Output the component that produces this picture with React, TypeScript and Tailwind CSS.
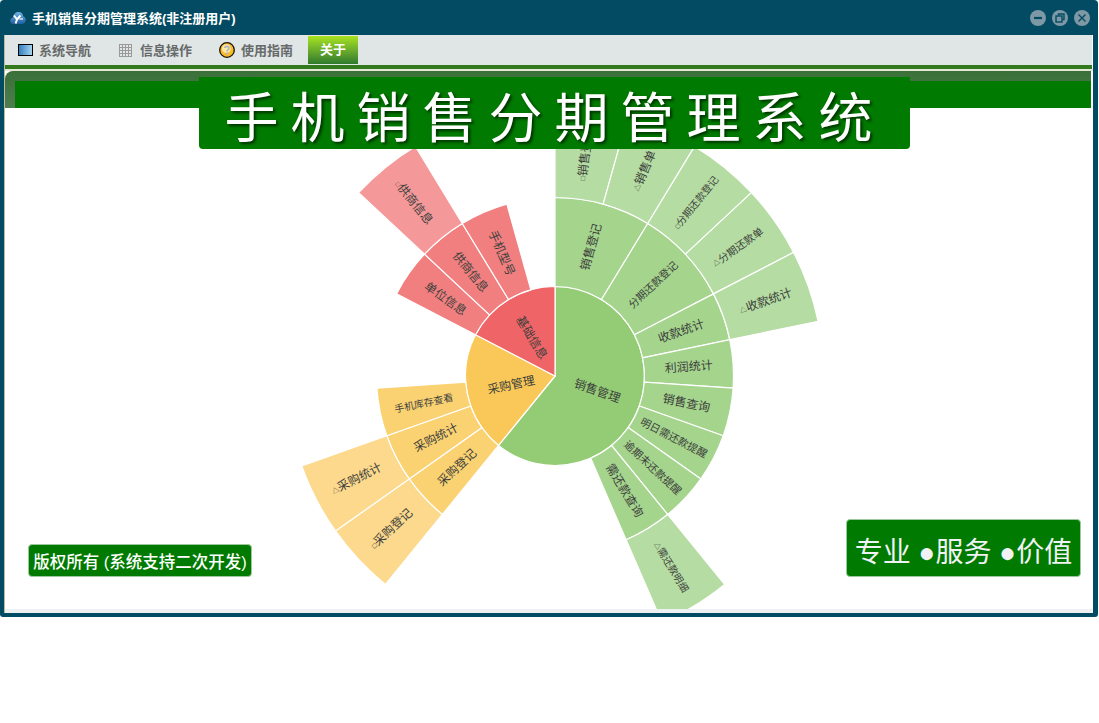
const CX = 550;
const CY = 305;
const UNIT = 360 / 23;

const FILL = {
  green: ["#94cc76", "#a5d48d", "#b5dca2"],
  orange: ["#fac858", "#fbd272", "#fcd98c"],
  red: ["#ef6567", "#f17f80", "#f59899"],
};

type Node = {
  label: string;
  mark?: string;
  from: number;
  to: number;
  ring: number;
  color: keyof typeof FILL;
  size: number;
};

const nodes: Node[] = [
  { label: "销售管理", from: 0, to: 14, ring: 0, color: "green", size: 12 },
  { label: "采购管理", from: 14, to: 19, ring: 0, color: "orange", size: 12 },
  { label: "基础信息", from: 19, to: 23, ring: 0, color: "red", size: 12 },

  { label: "销售登记", from: 0, to: 2, ring: 1, color: "green", size: 12 },
  { label: "分期还款登记", from: 2, to: 4, ring: 1, color: "green", size: 10.5 },
  { label: "收款统计", from: 4, to: 5, ring: 1, color: "green", size: 12 },
  { label: "利润统计", from: 5, to: 6, ring: 1, color: "green", size: 12 },
  { label: "销售查询", from: 6, to: 7, ring: 1, color: "green", size: 12 },
  { label: "明日需还款提醒", from: 7, to: 8, ring: 1, color: "green", size: 10.5 },
  { label: "逾期未还款提醒", from: 8, to: 9, ring: 1, color: "green", size: 10.5 },
  { label: "需还款查询", from: 9, to: 10, ring: 1, color: "green", size: 12 },
  { label: "采购登记", from: 14, to: 15, ring: 1, color: "orange", size: 12 },
  { label: "采购统计", from: 15, to: 16, ring: 1, color: "orange", size: 12 },
  { label: "手机库存查看", from: 16, to: 17, ring: 1, color: "orange", size: 10 },
  { label: "单位信息", from: 19, to: 20, ring: 1, color: "red", size: 12 },
  { label: "供商信息", from: 20, to: 21, ring: 1, color: "red", size: 12 },
  { label: "手机型号", from: 21, to: 22, ring: 1, color: "red", size: 12 },

  { label: "销售登记", mark: "□", from: 0, to: 1, ring: 2, color: "green", size: 12 },
  { label: "销售单", mark: "△", from: 1, to: 2, ring: 2, color: "green", size: 12 },
  { label: "分期还款登记", mark: "□", from: 2, to: 3, ring: 2, color: "green", size: 10 },
  { label: "分期还款单", mark: "△", from: 3, to: 4, ring: 2, color: "green", size: 10.5 },
  { label: "收款统计", mark: "△", from: 4, to: 5, ring: 2, color: "green", size: 12 },
  { label: "需还款明细", mark: "△", from: 9, to: 10, ring: 2, color: "green", size: 10 },
  { label: "采购登记", mark: "□", from: 14, to: 15, ring: 2, color: "orange", size: 12 },
  { label: "采购统计", mark: "△", from: 15, to: 16, ring: 2, color: "orange", size: 12 },
  { label: "供商信息", mark: "□", from: 20, to: 21, ring: 2, color: "red", size: 12 },
];

const RADII = [0, 89.5, 178.5, 268.7];

function point(r: number, deg: number) {
  const a = (deg * Math.PI) / 180;
  return [CX + r * Math.sin(a), CY - r * Math.cos(a)];
}

function slicePath(n: Node) {
  const r0 = RADII[n.ring];
  const r1 = RADII[n.ring + 1];
  const a0 = n.from * UNIT;
  const a1 = n.to * UNIT;
  const large = a1 - a0 > 180 ? 1 : 0;
  const [x0, y0] = point(r1, a0);
  const [x1, y1] = point(r1, a1);
  if (r0 === 0) return `M${CX},${CY} L${x0},${y0} A${r1},${r1} 0 ${large} 1 ${x1},${y1} Z`;
  const [x2, y2] = point(r0, a1);
  const [x3, y3] = point(r0, a0);
  return `M${x0},${y0} A${r1},${r1} 0 ${large} 1 ${x1},${y1} L${x2},${y2} A${r0},${r0} 0 ${large} 0 ${x3},${y3} Z`;
}

function Sunburst() {
  return (
    <svg className="absolute inset-0 w-full h-full" viewBox="0 0 1086 538">
      {nodes.map((n, i) => (
        <path key={i} d={slicePath(n)} fill={FILL[n.color][n.ring]} stroke="#ffffff" strokeWidth={1.2} />
      ))}
      {nodes.map((n, i) => {
        const mid = ((n.from + n.to) / 2) * UNIT;
        const [x, y] = point((RADII[n.ring] + RADII[n.ring + 1]) / 2, mid);
        const rot = mid > 180 ? mid - 270 : mid - 90;
        return (
          <text
            key={i}
            x={x}
            y={y}
            transform={`rotate(${rot} ${x} ${y})`}
            textAnchor="middle"
            dominantBaseline="central"
            fontSize={n.size}
            fill="#3c3f3c"
          >
            {n.mark && (
              <tspan fontSize={7} fill="#333333">
                {n.mark}
              </tspan>
            )}
            {n.label}
          </text>
        );
      })}
    </svg>
  );
}

function AppLogo() {
  return (
    <svg width="16" height="14" viewBox="0 0 16 14">
      <defs>
        <linearGradient id="cloud" x1="0" y1="0" x2="0" y2="1">
          <stop offset="0" stopColor="#6fb2e6" />
          <stop offset="1" stopColor="#1f5f9f" />
        </linearGradient>
      </defs>
      <path d="M3.5 13 C1 13 0 11 0.4 9 C0.7 7.5 1.8 6.6 3 6.5 C3.3 3 6 1 8.5 1 C11.5 1 13 3 13.3 5.5 C15 6 16 7.6 15.6 9.6 C15.2 11.8 13.6 13 12 13 Z" fill="url(#cloud)" />
      <path d="M4 4.5 L7 8.5 L5.6 12.5 M10.5 4.5 L7 8.5" stroke="#ffffff" strokeWidth="2" fill="none" />
      <path d="M9.5 8 H13" stroke="#ffffff" strokeWidth="1.2" fill="none" />
    </svg>
  );
}

function MonitorIcon() {
  return <div className="w-[15px] h-[12px] border border-black bg-gradient-to-r from-[#2f7fc0] to-[#a6d3ee]" />;
}

function GridIcon() {
  return (
    <svg className="mr-[2px]" width="13" height="13" viewBox="0 0 13 13" stroke="#9a9a9a" strokeWidth="1">
      {[0.5, 3.5, 6.5, 9.5, 12.5].map((p) => (
        <g key={p}>
          <path d={`M${p} 0 V13`} />
          <path d={`M0 ${p} H13`} />
        </g>
      ))}
    </svg>
  );
}

function HelpIcon() {
  return (
    <svg width="16" height="16" viewBox="0 0 16 16">
      <circle cx="8" cy="8" r="7.3" fill="#f8bb2c" stroke="#1a1208" strokeWidth="1.3" />
      <circle cx="7.4" cy="6.6" r="4.4" fill="#fdeaa0" />
      <path d="M5.8 6 C5.8 3.8 10 3.8 10 6 C10 7.6 8 7.6 8 9.4" stroke="#b4b4c4" strokeWidth="1.7" fill="none" />
      <circle cx="8" cy="11.6" r="1.1" fill="#b4b4c4" />
    </svg>
  );
}

function WinButton({ children }: { children: React.ReactNode }) {
  return (
    <div className="w-4 h-4 rounded-full bg-[#7e98a5] flex items-center justify-center">
      <svg width="12" height="12" viewBox="0 0 12 12" fill="none" stroke="#024b63" strokeWidth="1.4">
        {children}
      </svg>
    </div>
  );
}

function MenuItem({ icon, label, className }: { icon: React.ReactNode; label: string; className: string }) {
  return (
    <div className={`flex items-center gap-[6px] ${className}`}>
      {icon}
      <span className="mt-[2px] text-[13px] font-bold text-[#666a6a]">{label}</span>
    </div>
  );
}

export default function App() {
  return (
    <div className="w-[1098px] h-[617px] bg-[#024b63] rounded-t-[4px] rounded-b-[3px] flex flex-col font-['Liberation_Sans','Noto_Sans_CJK_SC',sans-serif]">
      {/* title bar */}
      <div className="h-[35px] flex items-center pl-[10px] pr-[8px]">
        <AppLogo />
        <span className="ml-[6px] mt-[2px] text-[13px] font-bold text-white">手机销售分期管理系统(非注册用户)</span>
        <div className="ml-auto flex gap-[6px]">
          <WinButton>
            <path d="M2 6 H10" strokeWidth="2.2" />
          </WinButton>
          <WinButton>
            <rect x="2" y="4" width="6" height="6" />
            <path d="M4.5 3.5 V2 H10 V7.5 H8.5" />
          </WinButton>
          <WinButton>
            <path d="M2.5 2.5 L9.5 9.5 M9.5 2.5 L2.5 9.5" />
          </WinButton>
        </div>
      </div>

      {/* body */}
      <div className="flex-1 ml-[4px] mr-[5px] mb-[4px] border-l border-[#b9bb9a] bg-white flex flex-col min-h-0">
        <div className="h-[30px] mr-[1px] bg-[#e0e5e5] flex items-center">
          <MenuItem icon={<MonitorIcon />} label="系统导航" className="ml-[13px]" />
          <MenuItem icon={<GridIcon />} label="信息操作" className="ml-[28px]" />
          <MenuItem icon={<HelpIcon />} label="使用指南" className="ml-[27px]" />
          <div className="ml-[15px] w-[50px] h-[28px] bg-gradient-to-b from-[#a8e41c] to-[#2f7a2c] flex items-center justify-center text-[13px] font-bold text-white">
            关于
          </div>
        </div>
        <div className="h-[4px] mr-[1px] bg-[#337a1e]" />
        <div className="h-[2px] bg-[#e4e6d8]" />

        {/* panel */}
        <div className="relative flex-1 mr-[2px] overflow-hidden bg-white min-h-0">
          <Sunburst />
          <div className="relative h-[37px] rounded-tl-[8px] bg-gradient-to-b from-[#3a7038] to-[#4f7d50]">
            <div className="absolute left-[10px] right-0 top-[10px] bottom-0 bg-[#007a00]" />
          </div>
          <div className="absolute left-[194px] top-[6px] w-[711px] h-[72px] pt-[13px] rounded-b-[4px] bg-[#007a00] flex items-center justify-center text-[54px] tracking-[12px] whitespace-nowrap text-white [text-shadow:2px_2px_3px_rgba(0,0,0,0.6)]">
            手机销售分期管理系统
          </div>
          <div className="absolute left-[23px] bottom-[32px] w-[224px] h-[33px] pt-[3px] rounded-[4px] border border-[#9cc89c] bg-[#007a00] flex items-center justify-center text-[16.5px] font-medium whitespace-nowrap text-white">
            版权所有 (系统支持二次开发)
          </div>
          <div className="absolute right-[10px] bottom-[32px] w-[235px] h-[58px] pt-[10px] rounded-[4px] border border-[#9cc89c] bg-[#007a00] flex items-center justify-center text-[28px] whitespace-nowrap text-[#f0f2f5]">
            专业 ●服务 ●价值
          </div>
        </div>
        <div className="h-[4px] bg-[#eef1f2]" />
      </div>
    </div>
  );
}
